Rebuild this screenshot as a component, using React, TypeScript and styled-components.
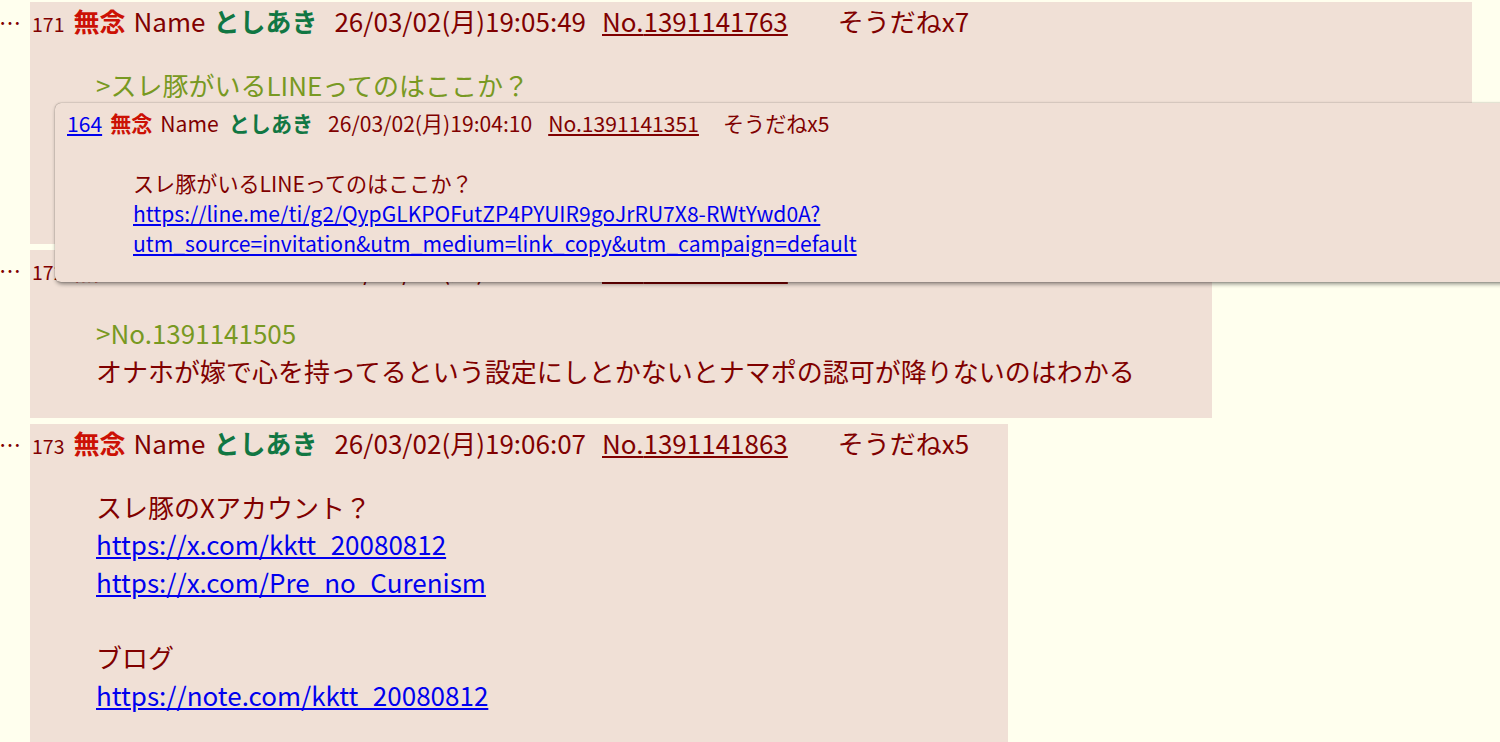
import React from "react";
import styled, { createGlobalStyle } from "styled-components";

const GlobalStyle = createGlobalStyle`
  html, body {
    margin: 0;
    padding: 0;
    overflow: hidden;
    background: #ffffee;
  }
  body {
    font-family: "Noto Sans CJK JP", "Noto Sans", sans-serif;
    color: #800000;
  }
`;

const Thread = styled.div`
  position: relative;
  display: flex;
  flex-direction: column;
  gap: 6px;
  padding-top: 2px;
`;

const Row = styled.div`
  display: flex;
  align-items: flex-start;
`;

const Rts = styled.div`
  width: 30px;
  flex: none;
  font-size: 22px;
  line-height: 38px;
  color: #800000;
  text-indent: -1px;
  white-space: nowrap;
`;

const Post = styled.div<{ $w: number }>`
  width: ${(p) => p.$w}px;
  box-sizing: border-box;
  background: #f0e0d6;
  padding: 0 2px 2px;
  flex: none;
`;

const Head = styled.div<{ $size: number; $lh: number }>`
  display: flex;
  align-items: baseline;
  white-space: nowrap;
  font-size: ${(p) => p.$size}px;
  line-height: ${(p) => p.$lh}px;
`;

const Num = styled.span`
  font-size: 0.75em;
`;

const NumLink = styled.a`
  color: #0000ee;
  text-decoration: underline;
`;

const Title = styled.span<{ $ml: number }>`
  margin-left: ${(p) => p.$ml}px;
  color: #cc1105;
  font-weight: bold;
`;

const Label = styled.span<{ $ml: number }>`
  margin-left: ${(p) => p.$ml}px;
`;

const Author = styled.span<{ $ml: number }>`
  margin-left: ${(p) => p.$ml}px;
  color: #117743;
  font-weight: bold;
`;

const NoLink = styled.a<{ $ml: number }>`
  margin-left: ${(p) => p.$ml}px;
  color: #800000;
  text-decoration: underline;
`;

const Sod = styled.span<{ $ml: number }>`
  margin-left: ${(p) => p.$ml}px;
`;

const Body = styled.div<{ $size: number; $lh: number; $ml: number; $mt: number; $mb: number }>`
  font-size: ${(p) => p.$size}px;
  line-height: ${(p) => p.$lh}px;
  margin: ${(p) => p.$mt}px 0 ${(p) => p.$mb}px ${(p) => p.$ml}px;
  white-space: nowrap;
`;

const Line = styled.div`
  min-height: 1lh;
`;

const Quote = styled.div`
  color: #789922;
`;

const Url = styled.a`
  display: block;
  width: max-content;
  color: #0000ee;
  text-decoration: underline;
`;

const Popup = styled.div`
  position: absolute;
  left: 55px;
  top: 103px;
  width: 1500px;
  height: 179px;
  box-sizing: border-box;
  background: #f0e0d6;
  border-radius: 6px;
  box-shadow: 0 0 1px rgba(0, 0, 0, 0.55), 1px 2px 4px rgba(0, 0, 0, 0.45);
  padding: 5px 12px;
`;

type HeadData = {
  no: string;
  date: string;
  id: string;
  sod: string;
};

const MainHead = ({ no, date, id, sod }: HeadData) => (
  <Head $size={26} $lh={38}>
    <Num>{no}</Num>
    <Title $ml={9}>無念</Title>
    <Label $ml={8}>Name</Label>
    <Author $ml={8}>としあき</Author>
    <Label $ml={17}>{date}</Label>
    <NoLink $ml={16} href="#">
      No.{id}
    </NoLink>
    <Sod $ml={50}>{sod}</Sod>
  </Head>
);

export default function App() {
  return (
    <>
      <GlobalStyle />
      <Thread>
        <Row>
          <Rts>…</Rts>
          <Post $w={1442}>
            <MainHead no="171" date="26/03/02(月)19:05:49" id="1391141763" sod="そうだねx7" />
            <Body $size={26} $lh={37.6} $ml={64} $mt={23} $mb={26}>
              <Quote>&gt;スレ豚がいるLINEってのはここか？</Quote>
              <Quote>&gt;https://line.me/ti/g2/QypGLKPOFutZP4PYUIR9goJrRU7X8-RWtYwd0A?</Quote>
              <Quote>&gt;utm_source=invitation&amp;utm_medium=link_copy&amp;utm_campaign=default</Quote>
              <Line>そうらしい</Line>
            </Body>
          </Post>
        </Row>
        <Row>
          <Rts>…</Rts>
          <Post $w={1182}>
            <MainHead no="172" date="26/03/02(月)19:05:58" id="1391141802" sod="そうだねx3" />
            <Body $size={26} $lh={37.6} $ml={64} $mt={23} $mb={26}>
              <Quote>&gt;No.1391141505</Quote>
              <Line>オナホが嫁で心を持ってるという設定にしとかないとナマポの認可が降りないのはわかる</Line>
            </Body>
          </Post>
        </Row>
        <Row>
          <Rts>…</Rts>
          <Post $w={978}>
            <MainHead no="173" date="26/03/02(月)19:06:07" id="1391141863" sod="そうだねx5" />
            <Body $size={26} $lh={37.6} $ml={64} $mt={23} $mb={34}>
              <Line>スレ豚のXアカウント？</Line>
              <Url href="#">https://x.com/kktt_20080812</Url>
              <Url href="#">https://x.com/Pre_no_Curenism</Url>
              <Line />
              <Line>ブログ</Line>
              <Url href="#">https://note.com/kktt_20080812</Url>
            </Body>
          </Post>
        </Row>
        <Popup>
          <Head $size={21.1} $lh={30}>
            <NumLink href="#">164</NumLink>
            <Title $ml={8}>無念</Title>
            <Label $ml={8}>Name</Label>
            <Author $ml={10}>としあき</Author>
            <Label $ml={15}>26/03/02(月)19:04:10</Label>
            <NoLink $ml={16} href="#">
              No.1391141351
            </NoLink>
            <Sod $ml={24}>そうだねx5</Sod>
          </Head>
          <Body $size={21.1} $lh={30} $ml={66} $mt={30} $mb={0}>
            <Line>スレ豚がいるLINEってのはここか？</Line>
            <Url href="#">https://line.me/ti/g2/QypGLKPOFutZP4PYUIR9goJrRU7X8-RWtYwd0A?</Url>
            <Url href="#">utm_source=invitation&amp;utm_medium=link_copy&amp;utm_campaign=default</Url>
          </Body>
        </Popup>
      </Thread>
    </>
  );
}
